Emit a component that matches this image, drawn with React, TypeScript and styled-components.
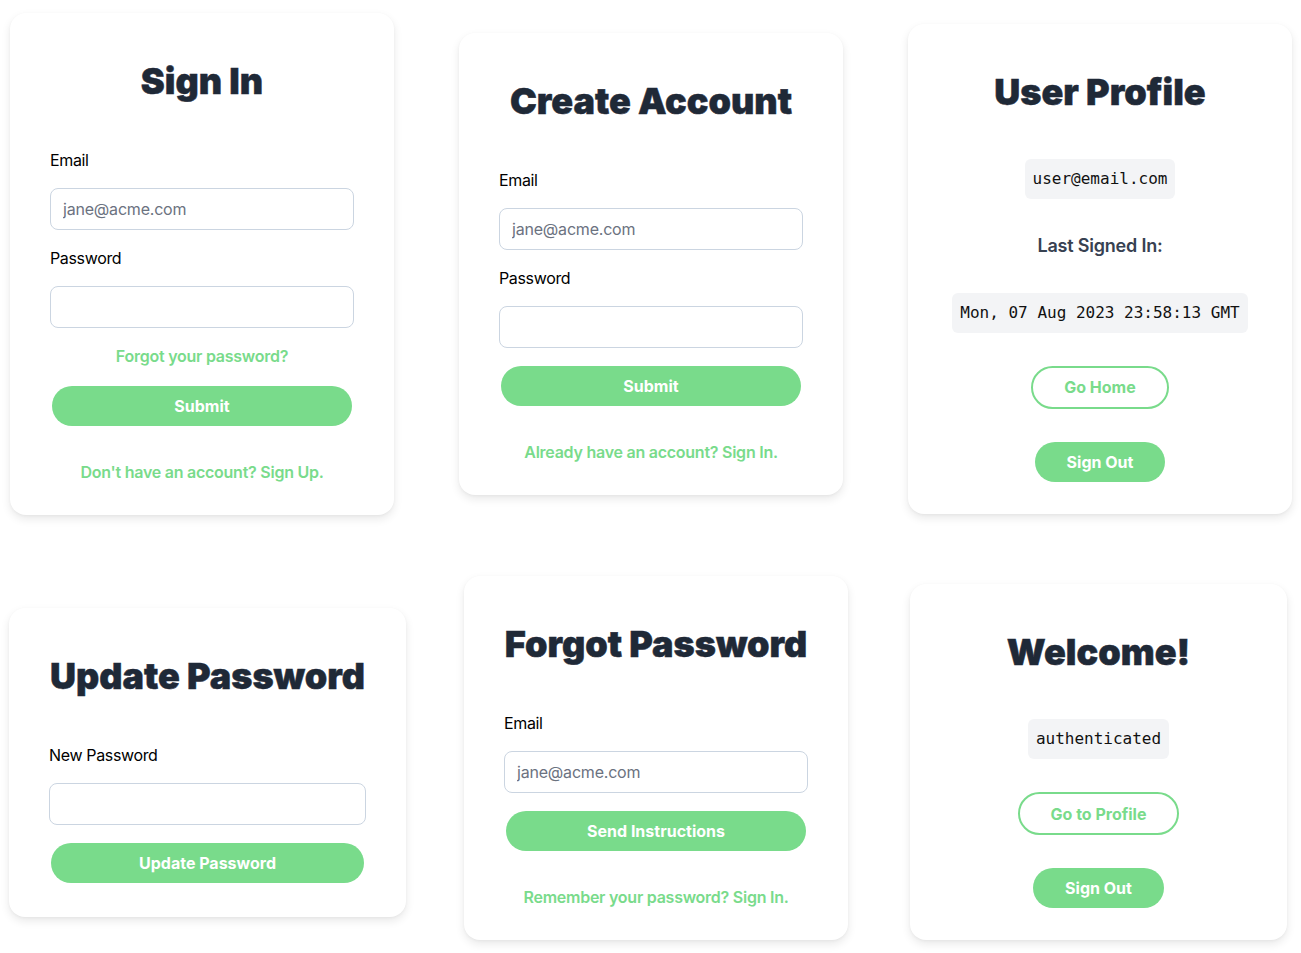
import React from "react";
import styled, { createGlobalStyle } from "styled-components";

const GREEN = "#79db8b";

const Global = createGlobalStyle`
  html, body { margin: 0; padding: 0; background: #ffffff; }
  body { font-family: Inter, "Noto Sans", "Liberation Sans", sans-serif; color: #000; }
  * { box-sizing: border-box; }
`;

const Page = styled.main`
  display: grid;
  grid-template-columns: repeat(3, 384px);
  grid-template-rows: 528px 460px;
  column-gap: 65px;
  padding-left: 10px;
  align-items: center;
  justify-items: start;
`;

const Card = styled.section<{ $w?: number; $mt?: number; $ml?: number }>`
  width: ${(p) => p.$w ?? 384}px;
  margin-top: ${(p) => p.$mt ?? 0}px;
  margin-left: ${(p) => p.$ml ?? 0}px;
  background: #fff;
  border-radius: 16px;
  box-shadow: 0 4px 10px rgba(0, 0, 0, 0.09), 0 1px 3px rgba(0, 0, 0, 0.04);
  padding: 48px 40px 32px;
  display: flex;
  flex-direction: column;
`;

const Title = styled.h1`
  margin: 0 0 47px;
  font-size: 36px;
  line-height: 40px;
  font-weight: 900;
  color: #1f2937;
  -webkit-text-stroke: 0.5px #1f2937;
  text-align: center;
  white-space: nowrap;
`;

const Form = styled.form`
  display: flex;
  flex-direction: column;
  gap: 16px;
`;

const Label = styled.label`
  font-size: 16px;
  line-height: 24px;
  letter-spacing: -0.35px;
  color: #000;
`;

const Input = styled.input`
  height: 42px;
  width: 100%;
  border: 1px solid #cbd5e1;
  border-radius: 8px;
  padding: 0 12px;
  font-family: inherit;
  font-size: 16px;
  letter-spacing: -0.2px;
  color: #111827;
  background: #fff;
  outline: none;
  &::placeholder { color: #6b7280; }
`;

const BlockButton = styled.button`
  margin: 2px;
  height: 40px;
  border: none;
  border-radius: 9999px;
  background: ${GREEN};
  color: #fff;
  font-family: inherit;
  font-size: 16px;
  font-weight: 700;
  cursor: pointer;
`;

const InlineLink = styled.a`
  display: block;
  text-align: center;
  color: ${GREEN};
  font-size: 16px;
  line-height: 24px;
  font-weight: 600;
  letter-spacing: -0.25px;
  text-decoration: none;
`;

const FooterLink = styled(InlineLink)`
  margin-top: 33px;
  line-height: 22px;
`;

const Stack = styled.div`
  display: flex;
  flex-direction: column;
  align-items: center;
  gap: 33px;
`;

const Code = styled.code`
  display: inline-block;
  font-family: "DejaVu Sans Mono", "Liberation Mono", monospace;
  font-size: 16px;
  line-height: 24px;
  padding: 8px;
  border-radius: 6px;
  background: #f3f4f6;
  color: #111;
  white-space: nowrap;
`;

const Caption = styled.p`
  margin: 0;
  font-size: 18px;
  line-height: 28px;
  font-weight: 600;
  letter-spacing: -0.2px;
  color: #374151;
`;

const PillButton = styled.button<{ $outline?: boolean }>`
  height: ${(p) => (p.$outline ? 43 : 40)}px;
  padding: 0 ${(p) => (p.$outline ? 31 : 32)}px;
  border-radius: 9999px;
  border: ${(p) => (p.$outline ? `2px solid ${GREEN}` : "none")};
  background: ${(p) => (p.$outline ? "#fff" : GREEN)};
  color: ${(p) => (p.$outline ? GREEN : "#fff")};
  font-family: inherit;
  font-size: 16px;
  font-weight: 700;
  cursor: pointer;
`;

export default function App() {
  return (
    <>
      <Global />
      <Page>
        <Card>
          <Title>Sign In</Title>
          <Form onSubmit={(e) => e.preventDefault()}>
            <Label>Email</Label>
            <Input type="email" placeholder="jane@acme.com" />
            <Label>Password</Label>
            <Input type="password" />
            <InlineLink href="#">Forgot your password?</InlineLink>
            <BlockButton type="submit">Submit</BlockButton>
          </Form>
          <FooterLink href="#">Don't have an account? Sign Up.</FooterLink>
        </Card>

        <Card>
          <Title>Create Account</Title>
          <Form onSubmit={(e) => e.preventDefault()}>
            <Label>Email</Label>
            <Input type="email" placeholder="jane@acme.com" />
            <Label>Password</Label>
            <Input type="password" />
            <BlockButton type="submit">Submit</BlockButton>
          </Form>
          <FooterLink href="#">Already have an account? Sign In.</FooterLink>
        </Card>

        <Card $mt={9}>
          <Title>User Profile</Title>
          <Stack>
            <Code>user@email.com</Code>
            <Caption>Last Signed In:</Caption>
            <Code>Mon, 07 Aug 2023 23:58:13 GMT</Code>
            <PillButton $outline>Go Home</PillButton>
            <PillButton>Sign Out</PillButton>
          </Stack>
        </Card>

        <Card $w={397} $ml={-1} $mt={8}>
          <Title>Update Password</Title>
          <Form onSubmit={(e) => e.preventDefault()}>
            <Label>New Password</Label>
            <Input type="password" />
            <BlockButton type="submit">Update Password</BlockButton>
          </Form>
        </Card>

        <Card $ml={5}>
          <Title>Forgot Password</Title>
          <Form onSubmit={(e) => e.preventDefault()}>
            <Label>Email</Label>
            <Input type="email" placeholder="jane@acme.com" />
            <BlockButton type="submit">Send Instructions</BlockButton>
          </Form>
          <FooterLink href="#">Remember your password? Sign In.</FooterLink>
        </Card>

        <Card $w={377} $ml={2} $mt={8}>
          <Title>Welcome!</Title>
          <Stack>
            <Code>authenticated</Code>
            <PillButton $outline>Go to Profile</PillButton>
            <PillButton>Sign Out</PillButton>
          </Stack>
        </Card>
      </Page>
    </>
  );
}
